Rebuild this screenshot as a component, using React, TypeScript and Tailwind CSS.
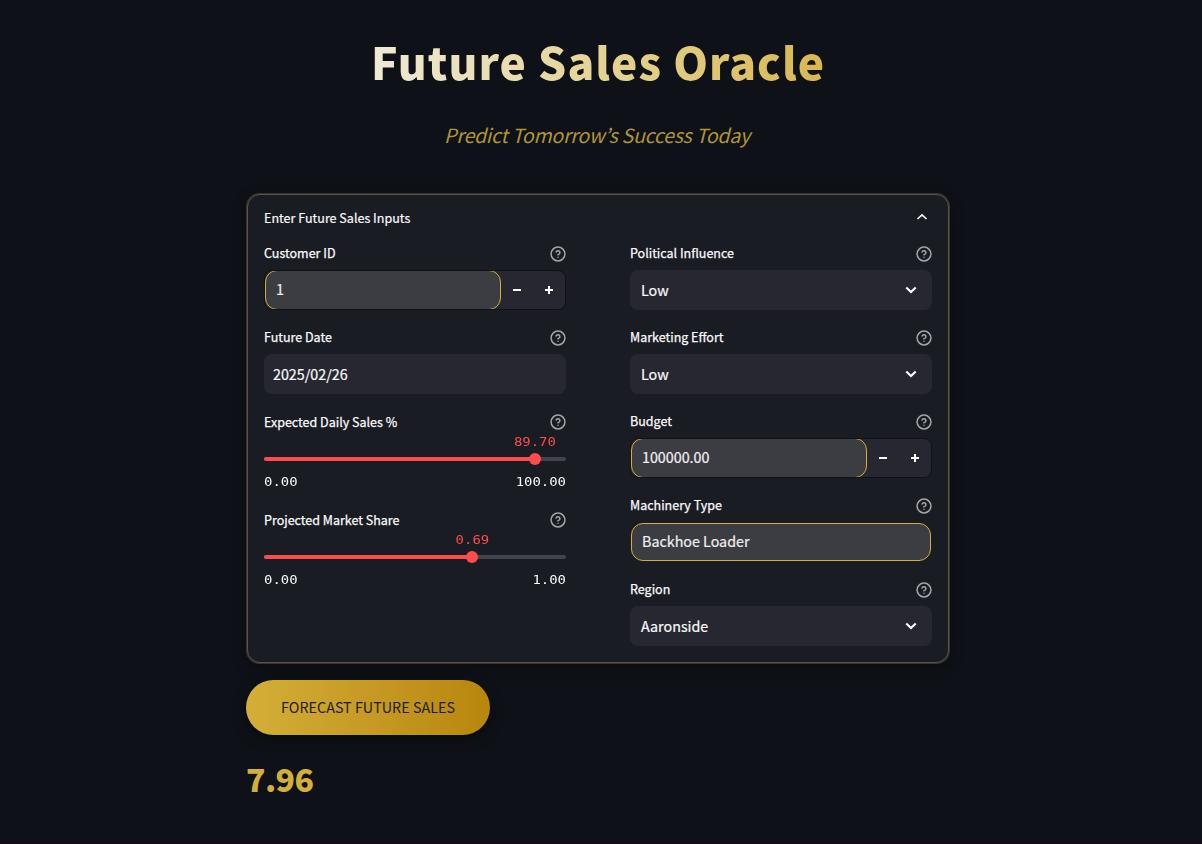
import type { ReactNode } from "react";

function HelpIcon() {
  return (
    <svg width="16" height="16" viewBox="0 0 24 24" fill="none" stroke="#a3a5a9" strokeWidth="2.25" strokeLinecap="round" strokeLinejoin="round">
      <circle cx="12" cy="12" r="10.4" />
      <path d="M9.09 9a3 3 0 0 1 5.83 1c0 2-3 3-3 3" />
      <path d="M12 17h.01" />
    </svg>
  );
}

function Label({ text, low = false }: { text: string; low?: boolean }) {
  return (
    <div className="flex h-6 items-center justify-between">
      <span className={`text-[12.5px] leading-[22px] whitespace-nowrap text-[#fafafa] [-webkit-text-stroke:0.25px_#fafafa] ${low ? "" : "-mt-0.5"}`}>{text}</span>
      <HelpIcon />
    </div>
  );
}

function Field({ label, children }: { label: string; children: ReactNode }) {
  return (
    <div className="flex flex-col gap-1">
      <Label text={label} />
      {children}
    </div>
  );
}

function Select({ value }: { value: string }) {
  return (
    <div className="flex h-10 items-center justify-between rounded-lg bg-[#262730] pr-[15px] pl-[11px]">
      <span className="text-[14.3px] leading-6 text-[#fafafa] [-webkit-text-stroke:0.2px_#fafafa]">{value}</span>
      <svg width="12" height="8" viewBox="0 0 12 8" fill="none" stroke="#fafafa" strokeWidth="2.2">
        <path d="M1.3 1.5L6 6L10.7 1.5" />
      </svg>
    </div>
  );
}

function NumberInput({ value }: { value: string }) {
  return (
    <div className="flex h-10 overflow-hidden rounded-lg border border-[#0f1116] bg-[#262730]">
      <div className="-my-px flex w-[236px] items-center rounded-xl border border-[#d4af37] bg-[#3c3c43] px-[10px]">
        <span className="-mt-0.5 text-[14.3px] leading-6 text-[#f0f0f0] [-webkit-text-stroke:0.2px_#f0f0f0]">{value}</span>
      </div>
      <div className="flex w-8 items-center justify-center">
        <svg width="8" height="8" viewBox="0 0 8 8" fill="#fff"><path d="M0 3h8v2H0z" /></svg>
      </div>
      <div className="flex w-8 items-center justify-center">
        <svg width="8" height="8" viewBox="0 0 8 8" fill="#fff"><path d="M3 0v3H0v2h3v3h2V5h3V3H5V0z" /></svg>
      </div>
    </div>
  );
}

function Slider({ label, value, min, max, percent }: { label: string; value: string; min: string; max: string; percent: number }) {
  return (
    <div className="flex h-[82px] flex-col">
      <Label text={label} low />
      <div className="flex h-[23px] items-start font-['DejaVu_Sans_Mono',monospace] text-[13.95px] leading-[15px] text-[#ff4b4b]">
        <div className="flex w-0 justify-center" style={{ marginLeft: `${percent}%` }}>
          <span className="scale-y-90">{value}</span>
        </div>
      </div>
      <div className="flex h-1 items-center rounded-full bg-[#41444c]">
        <div className="h-1 rounded-l-full bg-[#ff4b4b]" style={{ width: `${percent}%` }} />
        <div className="-ml-1.5 size-3 shrink-0 rounded-full bg-[#ff4b4b]" />
      </div>
      <div className="flex justify-between pt-[10px] pb-px font-['DejaVu_Sans_Mono',monospace] text-[13.95px] leading-5 text-[#fafafa]">
        <span className="scale-y-90">{min}</span>
        <span className="scale-y-90">{max}</span>
      </div>
    </div>
  );
}

export default function App() {
  return (
    <div className="h-[844px] w-[1202px] overflow-hidden border-b-2 border-[#160a18] bg-[#0e1117] font-['Noto_Sans_CJK_JP','Noto_Sans_CJK_SC',sans-serif]">
      <main className="ml-[246px] w-[704px]">
        <h1 className="flex h-[128px] items-start justify-center pt-[31px]">
          <span className="bg-[linear-gradient(90deg,#f0ead6,#e3cf88_60%,#d9b750)] bg-clip-text text-[44.3px] leading-[60px] font-black tracking-[1.03px] text-transparent">Future Sales Oracle</span>
        </h1>
        <p className="h-[65px] pr-[2px] text-center text-[19.6px] leading-[13px] tracking-[-0.26px] text-[#b09535] italic">Predict Tomorrow’s Success Today</p>
        <section className="h-[471px] rounded-[13px] border border-[#34353a] bg-[#2b2c30] shadow-[0_4px_14px_rgba(0,0,0,0.3)]">
          <div className="h-[469px] rounded-[13px] border border-[#5c553a] bg-[#1a1c23] px-4">
            <header className="flex h-[47px] items-center justify-between pr-1 pb-0.5">
              <h2 className="text-[12.55px] leading-6 text-[#fafafa] [-webkit-text-stroke:0.2px_#fafafa]">Enter Future Sales Inputs</h2>
              <svg className="-mt-0.5" width="12" height="8" viewBox="0 0 12 8" fill="none" stroke="#fafafa" strokeWidth="1.7">
                <path d="M1.5 6L6 1.8L10.5 6" />
              </svg>
            </header>
            <div className="grid grid-cols-2 gap-x-16">
              <div className="flex flex-col gap-4">
                <Field label="Customer ID"><NumberInput value="1" /></Field>
                <Field label="Future Date">
                  <div className="flex h-10 items-center rounded-lg bg-[#262730] pl-[9px]">
                    <span className="text-[14.3px] leading-6 text-[#fafafa] [-webkit-text-stroke:0.2px_#fafafa]">2025/02/26</span>
                  </div>
                </Field>
                <Slider label="Expected Daily Sales %" value="89.70" min="0.00" max="100.00" percent={89.7} />
                <Slider label="Projected Market Share" value="0.69" min="0.00" max="1.00" percent={69} />
              </div>
              <div className="flex flex-col gap-4">
                <Field label="Political Influence"><Select value="Low" /></Field>
                <Field label="Marketing Effort"><Select value="Low" /></Field>
                <Field label="Budget"><NumberInput value="100000.00" /></Field>
                <Field label="Machinery Type">
                  <div className="flex h-10 rounded-lg p-px">
                    <div className="flex flex-1 items-center rounded-xl border border-[#d4af37] bg-[#3c3c43] px-[10px]">
                      <span className="-mt-0.5 text-[14.3px] leading-6 text-[#f0f0f0] [-webkit-text-stroke:0.2px_#f0f0f0]">Backhoe Loader</span>
                    </div>
                  </div>
                </Field>
                <Field label="Region"><Select value="Aaronside" /></Field>
              </div>
            </div>
          </div>
        </section>
        <button className="mt-4 flex h-[55px] w-[244px] items-center justify-center rounded-full bg-linear-to-r from-[#d4af37] to-[#b8860b] pb-px text-[14.35px] text-[#1c1c14] shadow-[0_4px_14px_rgba(0,0,0,0.45)]">
          FORECAST FUTURE SALES
        </button>
        <div className="mt-[19px] text-[32px] leading-[48px] font-black tracking-[-0.6px] text-[#d4af37]">7.96</div>
      </main>
    </div>
  );
}
